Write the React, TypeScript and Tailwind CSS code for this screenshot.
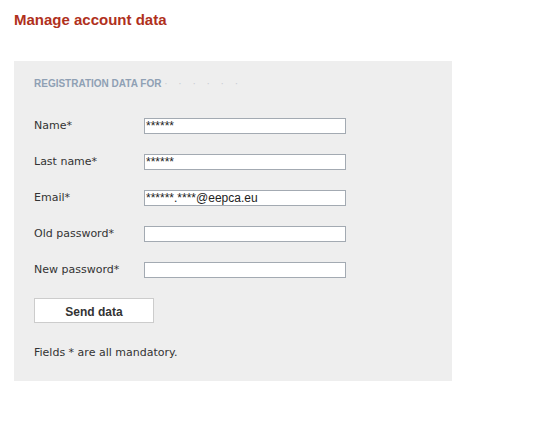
const fields = [
  { label: "Name*", value: "******" },
  { label: "Last name*", value: "******" },
  { label: "Email*", value: "******.****@eepca.eu" },
  { label: "Old password*", value: "" },
  { label: "New password*", value: "" },
];

export default function App() {
  return (
    <div className="min-h-[424px] w-[552px] bg-white px-[14px] pt-[11px]" style={{ fontFamily: "'DejaVu Sans', sans-serif" }}>
      {/* Title */}
      <h1 className="text-[15px] font-bold leading-[17px] text-[#b0301c]" style={{ fontFamily: "'Liberation Sans', Arial, sans-serif" }}>
        Manage account data
      </h1>

      {/* Panel */}
      <section className="mt-[33px] w-[438px] bg-[#eeeeee] px-[20px] pb-[21px] pt-[17px]">
        <h2
          className="text-[10px] font-bold leading-[11px] text-[#8fa0b4]"
          style={{ fontFamily: "'Liberation Sans', Arial, sans-serif" }}
        >
          REGISTRATION DATA FOR <span className="font-normal tracking-[4px] text-[#c8ccd2]">· · · · · ·</span>
        </h2>

        <form className="mt-[29px] flex flex-col gap-[20px]" onSubmit={(e) => e.preventDefault()}>
          {fields.map((f) => (
            <div key={f.label} className="flex h-[16px] items-center">
              <label className="w-[110px] shrink-0 pt-[1px] text-[11px] text-[#333333]">{f.label}</label>
              <input
                type="text"
                defaultValue={f.value}
                className="h-[16px] w-[202px] border border-[#a3aab2] bg-white px-[1px] text-[12px] leading-[14px] text-[#222222] outline-none"
                style={{ fontFamily: "'Liberation Sans', Arial, sans-serif" }}
              />
            </div>
          ))}

          <button
            type="submit"
            className="h-[25px] w-[120px] border border-[#cccccc] bg-white pt-[2px] text-[12px] font-bold text-[#333333]"
            style={{ fontFamily: "'Liberation Sans', Arial, sans-serif" }}
          >
            Send data
          </button>
        </form>

        <p className="mt-[22px] text-[11px] leading-[15px] text-[#333333]">Fields * are all mandatory.</p>
      </section>
    </div>
  );
}
